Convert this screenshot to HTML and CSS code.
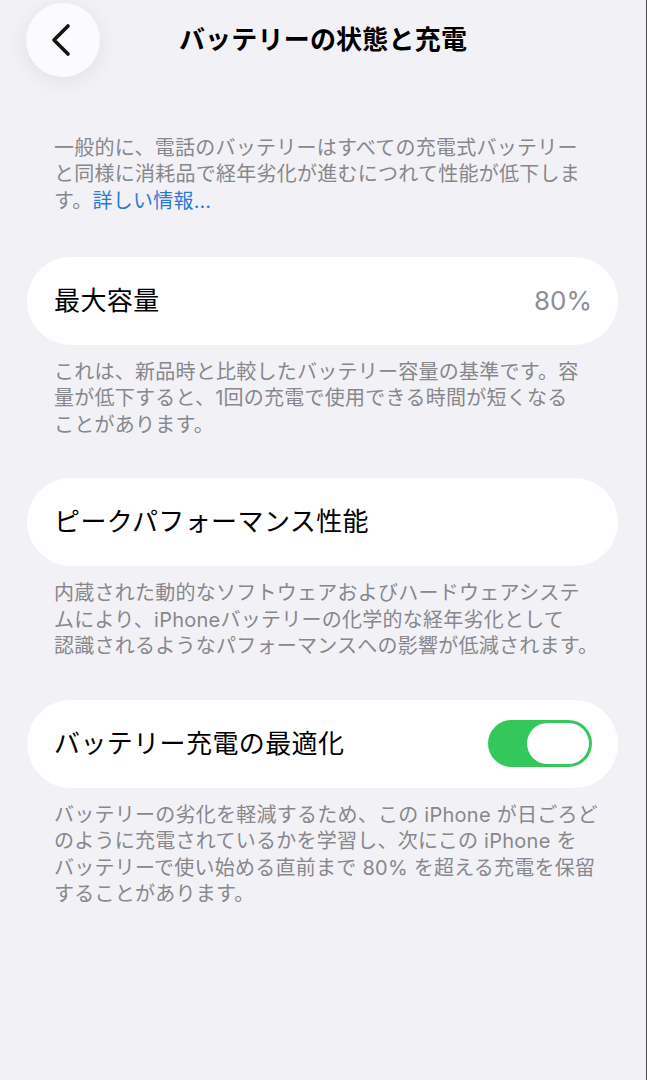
FILE: index.html
```html
<!DOCTYPE html>
<html lang="ja">
<head>
  <meta charset="UTF-8">
  <title>バッテリーの状態と充電</title>
  <meta name="viewport" content="width=device-width, initial-scale=1.0">
  <link rel="stylesheet" href="styles.css">
</head>
<body>
  <div class="screen">
    <header class="nav">
      <button class="back" aria-label="戻る">
        <svg width="24" height="34" viewBox="0 0 24 34">
          <path d="M19 3 L5 17 L19 31" fill="none" stroke="#111" stroke-width="3.6" stroke-linecap="round" stroke-linejoin="round"/>
        </svg>
      </button>
      <h1 class="title">バッテリーの状態と充電</h1>
    </header>

    <p class="note intro">一般的に、電話のバッテリーはすべての充電式バッテリー<br>と同様に消耗品で経年劣化が進むにつれて性能が低下しま<br>す。<a href="#" class="link">詳しい情報…</a></p>

    <section class="group">
      <div class="cell">
        <span class="label">最大容量</span>
        <span class="value">80%</span>
      </div>
      <p class="note">これは、新品時と比較したバッテリー容量の基準です。容<br>量が低下すると、1回の充電で使用できる時間が短くなる<br>ことがあります。</p>
    </section>

    <section class="group">
      <div class="cell">
        <span class="label">ピークパフォーマンス性能</span>
      </div>
      <p class="note">内蔵された動的なソフトウェアおよびハードウェアシステ<br>ムにより、iPhoneバッテリーの化学的な経年劣化として<br>認識されるようなパフォーマンスへの影響が低減されます。</p>
    </section>

    <section class="group">
      <div class="cell">
        <span class="label">バッテリー充電の最適化</span>
        <span class="toggle on"><span class="thumb"></span></span>
      </div>
      <p class="note">バッテリーの劣化を軽減するため、この iPhone が日ごろど<br>のように充電されているかを学習し、次にこの iPhone を<br>バッテリーで使い始める直前まで 80% を超える充電を保留<br>することがあります。</p>
    </section>
  </div>
</body>
</html>
```
FILE: styles.css
```css
* {
  box-sizing: border-box;
}

body {
  margin: 0;
  background: #f2f1f6;
  font-family: "Inter", "Noto Sans CJK JP", sans-serif;
  color: #000;
}

.screen {
  width: 647px;
  min-height: 1080px;
  border-right: 1px solid #4a4a50;
  padding-bottom: 40px;
}

.nav {
  display: grid;
  grid-template-columns: 74px 1fr 74px;
  align-items: center;
  padding: 3px 26px 0;
  height: 77px;
}

.back {
  width: 74px;
  height: 74px;
  border: none;
  border-radius: 50%;
  background: #fbfbfd;
  box-shadow: 0 4px 22px rgba(0,0,0,0.07);
  display: flex;
  align-items: center;
  justify-content: center;
  padding: 0 4px 0 0;
}

.title {
  margin: 0;
  text-align: center;
  font-size: 26px;
  font-weight: 700;
  line-height: 1;
  letter-spacing: 0.2px;
}

.note {
  margin: 14px 0 0;
  padding: 0 10px 0 54px;
  font-size: 20px;
  line-height: 26.5px;
  letter-spacing: 0.25px;
  color: #87878c;
  white-space: nowrap;
}

.intro {
  margin-top: 57.5px;
  padding-bottom: 1.5px;
}

.link {
  color: #2d7ad6;
  text-decoration: none;
}

.group {
  margin-top: 40px;
}

.intro + .group {
  margin-top: 41px;
}

.cell {
  margin: 0 28px 0 27px;
  height: 88px;
  background: #fff;
  border-radius: 44px;
  display: flex;
  align-items: center;
  justify-content: space-between;
  padding: 0 26px 0 27px;
}

.label {
  font-size: 26px;
  line-height: 1;
  letter-spacing: 0.4px;
}

.value {
  font-size: 26px;
  color: #8e8e93;
}

.toggle {
  width: 104px;
  height: 47px;
  border-radius: 24px;
  background: #34c759;
  display: flex;
  align-items: center;
  justify-content: flex-end;
  padding: 3px;
}

.thumb {
  width: 62px;
  height: 41px;
  border-radius: 21px;
  background: #fff;
}
```
